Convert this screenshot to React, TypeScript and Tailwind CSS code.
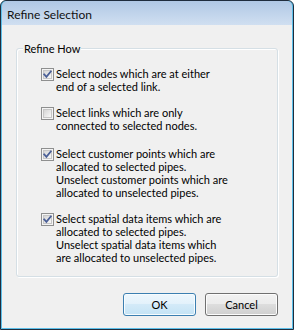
import React from "react";

const FONT = { fontFamily: "Lato, 'Noto Sans', sans-serif" };

const options = [
  {
    checked: true,
    lines: ["Select nodes which are at either", "end of a selected link."],
    gap: "mt-0",
  },
  {
    checked: false,
    lines: ["Select links which are only", "connected to selected nodes."],
    gap: "mt-[13px]",
  },
  {
    checked: true,
    lines: [
      "Select customer points which are",
      "allocated to selected pipes.",
      "Unselect customer points which are",
      "allocated to unselected pipes.",
    ],
    gap: "mt-[15px]",
  },
  {
    checked: true,
    lines: [
      "Select spatial data items which are",
      "allocated to selected pipes.",
      "Unselect spatial data items which",
      "are allocated to unselected pipes.",
    ],
    gap: "mt-[13px]",
  },
];

function CheckBox({ checked }: { checked: boolean }) {
  return (
    <svg width="13" height="13" viewBox="0 0 13 13" className="shrink-0">
      <defs>
        <linearGradient id="cbfill" x1="0" y1="0" x2="1" y2="1">
          <stop offset="0" stopColor="#d2d2d2" />
          <stop offset="1" stopColor="#fbfbfb" />
        </linearGradient>
      </defs>
      <rect x="0.5" y="0.5" width="12" height="12" fill="#f4f4f4" stroke="#8e8f8f" />
      <rect x="2.5" y="2.5" width="8" height="8" fill="url(#cbfill)" stroke="#c6c6c6" />
      {checked && (
        <path
          d="M3.2 6.4 L5.4 8.8 L9.8 3.4"
          fill="none"
          stroke="#4a5f97"
          strokeWidth="1.8"
          strokeLinecap="square"
        />
      )}
    </svg>
  );
}

export default function App() {
  return (
    <div
      className="w-[294px] h-[330px] text-[11px] text-black"
      style={FONT}
    >
      <div className="w-full h-full border border-[#1f2d3d] rounded-t-[6px] overflow-hidden bg-[#5cbfe9] flex flex-col">
        <div className="flex-1 flex flex-col mx-[1px] mb-[1px] rounded-t-[5px] overflow-hidden">
          {/* Title bar */}
          <div className="h-[24px] shrink-0 flex items-center pl-[5px] pt-[2px] bg-gradient-to-b from-[#b0c8e5] to-[#d0dff1] text-[#111] text-[12px] leading-[15px]">
            Refine Selection
          </div>

          {/* Body */}
          <div className="flex-1 bg-[#f0f0f0] px-[14px] pt-[23px] flex flex-col">
            <div className="relative h-[229px] border border-[#d5dfe5] rounded-[3px] shadow-[inset_1px_1px_0_#ffffff,1px_1px_0_#ffffff] pl-[24px] pt-[18px]">
              <span className="absolute -top-[8px] left-[6px] px-[1px] bg-[#f0f0f0] leading-[15px]">
                Refine How
              </span>
              {options.map((opt, idx) => (
                <div key={idx} className={`flex items-start ${opt.gap}`}>
                  <div className="mt-[1px]">
                    <CheckBox checked={opt.checked} />
                  </div>
                  <div className="ml-[2px] leading-[13px]">
                    {opt.lines.map((line, i) => (
                      <div key={i}>{line}</div>
                    ))}
                  </div>
                </div>
              ))}
            </div>

            {/* Buttons */}
            <div className="flex justify-end gap-[9px] mt-[16px]">
              <button className="w-[73px] h-[23px] rounded-[3px] border border-[#3c7fb1] bg-[linear-gradient(to_bottom,#eef7fd_0%,#e2f1fb_50%,#d3eaf8_50%,#c4e3f5_100%)] shadow-[inset_0_0_0_1px_#f7fcfe] leading-[15px]">
                OK
              </button>
              <button className="w-[73px] h-[23px] rounded-[3px] border border-[#707070] bg-[linear-gradient(to_bottom,#f2f2f2_0%,#ebebeb_50%,#dddddd_50%,#cfcfcf_100%)] shadow-[inset_0_0_0_1px_#fcfcfc] leading-[15px]">
                Cancel
              </button>
            </div>
          </div>
        </div>
      </div>
    </div>
  );
}
